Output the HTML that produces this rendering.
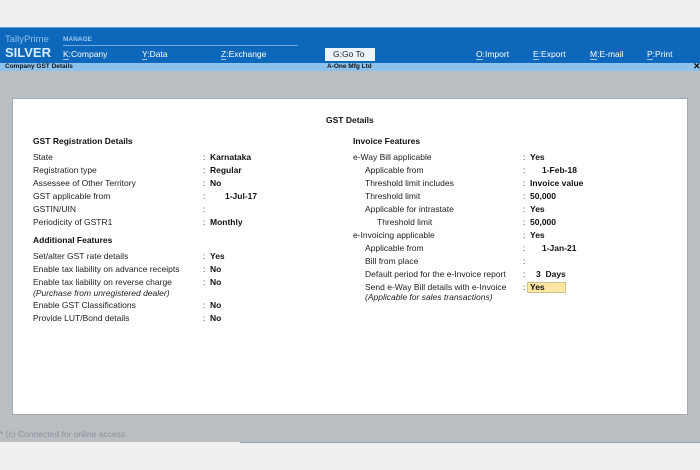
<!DOCTYPE html>
<html><head><meta charset="utf-8"><style>
*{margin:0;padding:0;box-sizing:border-box}
body{width:700px;height:470px;background:#efefef;position:relative;overflow:hidden;font-family:"Liberation Sans",Arial,sans-serif;color:#222}
.a{position:absolute;white-space:nowrap;font-size:8.5px;line-height:12px}
.b{font-weight:bold;color:#111}
.i{font-style:italic}
.w{color:#fff}
u{text-decoration:none;border-bottom:1px solid #9cc4ec}
</style></head><body>
<div style="position:absolute;left:0;top:27px;width:700px;height:36px;background:#0d67bb;border-top:1px solid #5aa0e0"></div>
<div style="position:absolute;left:63px;top:45px;width:235px;height:1px;background:#6ea8e0"></div>
<div class="a" style="left:5px;top:34px;font-size:9.5px;color:#8cc0f0">TallyPrime</div>
<div class="a" style="left:5px;top:46px;font-size:13px;line-height:14px;font-weight:bold;color:#d8ecff">SILVER</div>
<div class="a" style="left:63px;top:34px;font-size:6.5px;font-weight:bold;color:#9cc8f0">MANAGE</div>
<div class="a w" style="left:63px;top:48px"><u>K</u>:Company</div>
<div class="a w" style="left:142px;top:48px"><u>Y</u>:Data</div>
<div class="a w" style="left:221px;top:48px"><u>Z</u>:Exchange</div>
<div style="position:absolute;left:325px;top:48px;width:50px;height:13px;background:#eef4fb"></div>
<div class="a" style="left:333px;top:48px;color:#123">G:Go To</div>
<div class="a w" style="left:476px;top:48px"><u>O</u>:Import</div>
<div class="a w" style="left:533px;top:48px"><u>E</u>:Export</div>
<div class="a w" style="left:590px;top:48px"><u>M</u>:E-mail</div>
<div class="a w" style="left:647px;top:48px"><u>P</u>:Print</div>
<div style="position:absolute;left:0;top:63px;width:700px;height:8px;background:#8cc2ec"></div>
<div class="a b" style="left:5px;top:61px;font-size:6.5px">Company GST Details</div>
<div class="a b" style="left:327px;top:61px;font-size:6.5px">A-One Mfg Ltd</div>
<div class="a b" style="left:693px;top:60px;font-size:9px">✕</div>
<div style="position:absolute;left:0;top:71px;width:700px;height:371px;background:#b9bec3"></div>
<div style="position:absolute;left:12px;top:98px;width:676px;height:317px;background:#fff;border:1px solid #a5aab0"></div>
<div class="a" style="left:0;top:428px;font-size:8.5px;color:#8d9298">* (c) Connected for online access</div>
<div style="position:absolute;left:240px;top:442px;width:460px;height:1px;background:#9aa0a6"></div>

<div class="a b" style="left:326px;top:114px">GST Details</div>

<div class="a b" style="left:33px;top:135px">GST Registration Details</div>
<div class="a" style="left:33px;top:151px">State</div><div class="a" style="left:203px;top:151px">:</div><div class="a b" style="left:210px;top:151px">Karnataka</div>
<div class="a" style="left:33px;top:164px">Registration type</div><div class="a" style="left:203px;top:164px">:</div><div class="a b" style="left:210px;top:164px">Regular</div>
<div class="a" style="left:33px;top:177px">Assessee of Other Territory</div><div class="a" style="left:203px;top:177px">:</div><div class="a b" style="left:210px;top:177px">No</div>
<div class="a" style="left:33px;top:190px">GST applicable from</div><div class="a" style="left:203px;top:190px">:</div><div class="a b" style="left:225px;top:190px">1-Jul-17</div>
<div class="a" style="left:33px;top:203px">GSTIN/UIN</div><div class="a" style="left:203px;top:203px">:</div>
<div class="a" style="left:33px;top:216px">Periodicity of GSTR1</div><div class="a" style="left:203px;top:216px">:</div><div class="a b" style="left:210px;top:216px">Monthly</div>
<div class="a b" style="left:33px;top:234px">Additional Features</div>
<div class="a" style="left:33px;top:250px">Set/alter GST rate details</div><div class="a" style="left:203px;top:250px">:</div><div class="a b" style="left:210px;top:250px">Yes</div>
<div class="a" style="left:33px;top:263px">Enable tax liability on advance receipts</div><div class="a" style="left:203px;top:263px">:</div><div class="a b" style="left:210px;top:263px">No</div>
<div class="a" style="left:33px;top:276px">Enable tax liability on reverse charge</div><div class="a" style="left:203px;top:276px">:</div><div class="a b" style="left:210px;top:276px">No</div>
<div class="a i" style="left:33px;top:287px">(Purchase from unregistered dealer)</div>
<div class="a" style="left:33px;top:299px">Enable GST Classifications</div><div class="a" style="left:203px;top:299px">:</div><div class="a b" style="left:210px;top:299px">No</div>
<div class="a" style="left:33px;top:312px">Provide LUT/Bond details</div><div class="a" style="left:203px;top:312px">:</div><div class="a b" style="left:210px;top:312px">No</div>

<div class="a b" style="left:353px;top:135px">Invoice Features</div>
<div class="a" style="left:353px;top:151px">e-Way Bill applicable</div><div class="a" style="left:523px;top:151px">:</div><div class="a b" style="left:530px;top:151px">Yes</div>
<div class="a" style="left:365px;top:164px">Applicable from</div><div class="a" style="left:523px;top:164px">:</div><div class="a b" style="left:542px;top:164px">1-Feb-18</div>
<div class="a" style="left:365px;top:177px">Threshold limit includes</div><div class="a" style="left:523px;top:177px">:</div><div class="a b" style="left:530px;top:177px">Invoice value</div>
<div class="a" style="left:365px;top:190px">Threshold limit</div><div class="a" style="left:523px;top:190px">:</div><div class="a b" style="left:530px;top:190px">50,000</div>
<div class="a" style="left:365px;top:203px">Applicable for intrastate</div><div class="a" style="left:523px;top:203px">:</div><div class="a b" style="left:530px;top:203px">Yes</div>
<div class="a" style="left:377px;top:216px">Threshold limit</div><div class="a" style="left:523px;top:216px">:</div><div class="a b" style="left:530px;top:216px">50,000</div>
<div class="a" style="left:353px;top:229px">e-Invoicing applicable</div><div class="a" style="left:523px;top:229px">:</div><div class="a b" style="left:530px;top:229px">Yes</div>
<div class="a" style="left:365px;top:242px">Applicable from</div><div class="a" style="left:523px;top:242px">:</div><div class="a b" style="left:542px;top:242px">1-Jan-21</div>
<div class="a" style="left:365px;top:255px">Bill from place</div><div class="a" style="left:523px;top:255px">:</div>
<div class="a" style="left:365px;top:268px">Default period for the e-Invoice report</div><div class="a" style="left:523px;top:268px">:</div><div class="a b" style="left:536px;top:268px">3&nbsp; Days</div>
<div class="a" style="left:365px;top:281px">Send e-Way Bill details with e-Invoice</div><div class="a" style="left:523px;top:281px">:</div>
<div style="position:absolute;left:527px;top:282px;width:39px;height:11px;background:#fbe6a4;border:1px solid #c9c58a"></div>
<div class="a b" style="left:530px;top:281px">Yes</div>
<div class="a i" style="left:365px;top:291px">(Applicable for sales transactions)</div>
</body></html>
